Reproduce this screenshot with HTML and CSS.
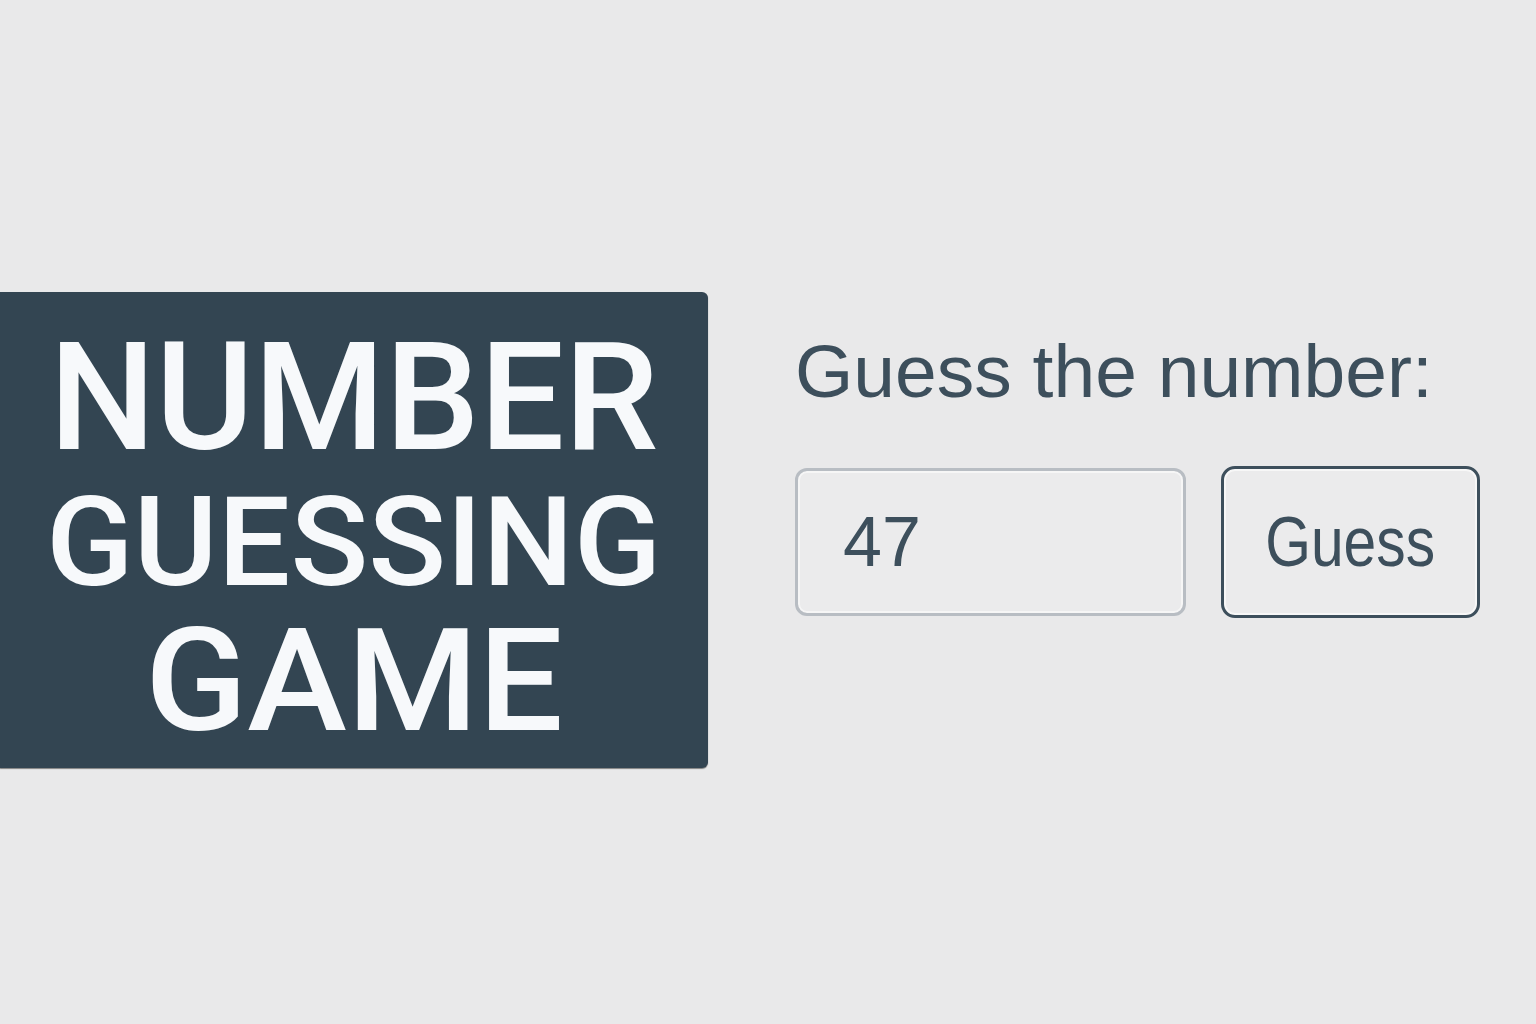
FILE: index.html
```html
<!DOCTYPE html>
<html lang="en">
<head>
<meta charset="utf-8">
<title>Number Guessing Game</title>
<link rel="stylesheet" href="styles.css">
</head>
<body>
<main class="page">
  <section class="title-panel">
    <h1 class="title">
      <span class="line line-1">NUMBER</span>
      <span class="line line-2">GUESSING</span>
      <span class="line line-3">GAME</span>
    </h1>
  </section>
  <section class="play">
    <label class="prompt" for="guess">Guess the number:</label>
    <div class="controls">
      <input id="guess" class="guess-input" type="text" value="47">
      <button class="guess-btn" type="button"><span class="btn-label">Guess</span></button>
    </div>
  </section>
</main>
</body>
</html>
```
FILE: styles.css
```css
html, body {
  margin: 0;
  padding: 0;
  background: #e9e9ea;
}

body {
  width: 1536px;
  height: 1024px;
  overflow: hidden;
}

.page {
  display: flex;
  align-items: flex-start;
  gap: 87px;
  padding-top: 292px;
}

.title-panel {
  width: 708px;
  height: 476px;
  box-sizing: border-box;
  background: #334552;
  border-radius: 0 6px 6px 0;
  box-shadow: 0 1px 1px rgba(0, 0, 0, 0.45);
  padding-top: 31px;
}

.title {
  margin: 0;
  display: flex;
  flex-direction: column;
  align-items: center;
  font-family: Roboto, "Liberation Sans", sans-serif;
  font-weight: 500;
  color: #f7f9fb;
}

.line {
  display: block;
  white-space: nowrap;
}

.line-1 {
  font-size: 150px;
  line-height: 150px;
  height: 150px;
}

.line-2 {
  font-size: 124px;
  line-height: 140px;
  height: 140px;
  transform: scaleX(1.037);
}

.line-3 {
  font-size: 143px;
  line-height: 137px;
  height: 137px;
  transform: scaleX(1.05);
}

.play {
  display: flex;
  flex-direction: column;
  padding-top: 42px;
}

.prompt {
  font-family: "Liberation Sans", Arial, sans-serif;
  font-size: 75px;
  line-height: 75px;
  color: #3d4f5c;
  white-space: nowrap;
}

.controls {
  display: flex;
  align-items: center;
  gap: 35px;
  margin-top: 57px;
}

.guess-input {
  width: 391px;
  height: 148px;
  box-sizing: border-box;
  border: 3px solid #b8bdc3;
  border-radius: 12px;
  background: #ebebec;
  box-shadow: inset 0 0 0 2px rgba(255, 255, 255, 0.55);
  padding: 0 0 0 45px;
  margin: 0;
  font-family: "Liberation Sans", Arial, sans-serif;
  font-size: 70px;
  color: #3d4f5c;
  outline: none;
}

.guess-btn {
  width: 259px;
  height: 152px;
  box-sizing: border-box;
  border: 3px solid #3d4f5c;
  border-radius: 14px;
  background: #ebebec;
  box-shadow: inset 0 0 0 2px rgba(255, 255, 255, 0.6);
  padding: 0;
  margin: 0;
  display: flex;
  align-items: center;
  justify-content: center;
  cursor: pointer;
}

.btn-label {
  display: inline-block;
  font-family: "Liberation Sans", Arial, sans-serif;
  font-size: 70px;
  line-height: 1;
  color: #3d4f5c;
  transform: scaleX(0.84);
}
```
